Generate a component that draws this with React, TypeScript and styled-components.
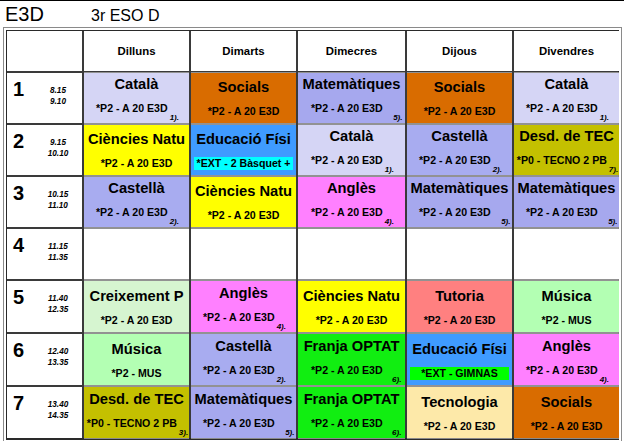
import React from "react";
import styled, { createGlobalStyle } from "styled-components";

const GlobalStyle = createGlobalStyle`
  html, body {
    margin: 0;
    padding: 0;
    background: #fff;
    font-family: "Liberation Sans", Arial, sans-serif;
    color: #000;
  }
`;

const Page = styled.div`
  width: 624px;
  height: 441px;
  overflow: hidden;
  border-top: 1px solid #000;
  box-sizing: border-box;
`;

const TitleBar = styled.div`
  height: 26px;
  box-sizing: border-box;
  padding: 2px 0 0 5px;
  display: flex;
  align-items: baseline;
`;

const Code = styled.div`
  width: 86px;
  font-size: 20px;
  line-height: 23px;
`;

const GroupName = styled.div`
  font-size: 16px;
  line-height: 23px;
`;

const Frame = styled.div`
  margin-left: 3px;
  width: 619px;
  box-sizing: border-box;
  border: 1px solid #8a8a8a;
  padding: 2px;
`;

const Grid = styled.div`
  display: grid;
  grid-template-columns: 75px 105px 105px 107px 105px 105px;
  grid-template-rows: 40px 50px 50px 50px 50px 51px 51px 51px;
  column-gap: 2px;
  row-gap: 2px;
  background: #3a3a3a;
  border: 1px solid #2a2a2a;
  border-bottom-width: 2px;
`;

const HeaderCell = styled.div`
  background: #fff;
  display: flex;
  align-items: center;
  justify-content: center;
  font-size: 11.4px;
  font-weight: bold;
`;

const TimeCell = styled.div`
  background: #fff;
  display: grid;
  grid-template-columns: 33px 1fr;
  padding-right: 6px;
`;

const SlotNumber = styled.div`
  font-size: 20px;
  line-height: 23px;
  font-weight: bold;
  padding: 5px 0 0 6px;
`;

const Times = styled.div`
  padding-top: 12px;
  font-size: 8.2px;
  line-height: 11.4px;
  font-weight: bold;
  font-style: italic;
  text-align: center;
`;

const Lesson = styled.div<{ $bg: string }>`
  background: ${(p) => p.$bg};
  display: flex;
  align-items: center;
  justify-content: center;
  overflow: hidden;
  box-shadow: 0 1px 0 rgba(255, 255, 255, 0.45), 0 -1px 0 rgba(255, 255, 255, 0.45);
`;

const Inner = styled.div`
  display: inline-flex;
  flex-direction: column;
  align-items: stretch;
`;

const Subject = styled.div`
  font-size: 14.7px;
  line-height: 18px;
  font-weight: bold;
  text-align: center;
  white-space: nowrap;
  padding: 0 2px;
`;

const RoomRow = styled.div`
  display: flex;
  margin-top: 9px;
`;

const Room = styled.div<{ $badge?: string }>`
  flex: 1;
  background: ${(p) => p.$badge || "transparent"};
  font-size: 10.6px;
  line-height: 13px;
  font-weight: bold;
  text-align: center;
  white-space: nowrap;
  padding: 0 2px;
`;

const NoteGhost = styled.span`
  visibility: hidden;
  font-size: 8px;
  line-height: 13px;
  font-weight: bold;
  font-style: italic;
  white-space: nowrap;
`;

const NoteRow = styled.div`
  font-size: 8px;
  line-height: 6px;
  height: 6px;
  font-weight: bold;
  font-style: italic;
  text-align: right;
  white-space: nowrap;
`;

type L = { s: string; c: string; r?: string; n?: string; b?: string };

const ROOM = "*P2 - A 20 E3D";
const C = {
  cat: "#d5d5f5",
  soc: "#d96c00",
  mat: "#a6a8ee",
  cas: "#a8acf0",
  cie: "#ffff00",
  ef: "#3f9bff",
  tec: "#c4c000",
  ang: "#ff80ff",
  cre: "#d6f5d0",
  mus: "#b3ffb3",
  tut: "#ff8080",
  fra: "#11ee11",
  tcn: "#fde9a9",
};

const cat = (n?: string): L => ({ s: "Català", c: C.cat, n });
const soc: L = { s: "Socials", c: C.soc };
const mat: L = { s: "Matemàtiques", c: C.mat, n: "5)." };
const cas: L = { s: "Castellà", c: C.cas, n: "2)." };
const cie: L = { s: "Ciències Natu", c: C.cie };
const ang: L = { s: "Anglès", c: C.ang, n: "4)." };
const mus: L = { s: "Música", c: C.mus, r: "*P2 - MUS" };
const fra: L = { s: "Franja OPTAT", c: C.fra, n: "6)." };
const tec = (n: string): L => ({ s: "Desd. de TEC", c: C.tec, r: "*P0 - TECNO 2 PB", n });

const DAYS = ["Dilluns", "Dimarts", "Dimecres", "Dijous", "Divendres"];

const SLOTS: { t: [string, string]; l: (L | null)[] }[] = [
  { t: ["8.15", "9.10"], l: [cat("1)."), soc, mat, soc, cat("1).")] },
  {
    t: ["9.15", "10.10"],
    l: [
      cie,
      { s: "Educació Físi", c: C.ef, r: "*EXT - 2 Bàsquet +", b: "#00ffff" },
      cat("1)."),
      cas,
      tec("7)."),
    ],
  },
  { t: ["10.15", "11.10"], l: [cas, cie, ang, mat, mat] },
  { t: ["11.15", "11.35"], l: [null, null, null, null, null] },
  {
    t: ["11.40", "12.35"],
    l: [{ s: "Creixement P", c: C.cre }, ang, cie, { s: "Tutoria", c: C.tut }, mus],
  },
  {
    t: ["12.40", "13.35"],
    l: [mus, cas, fra, { s: "Educació Físi", c: C.ef, r: "*EXT - GIMNAS", b: "#00ff00" }, ang],
  },
  {
    t: ["13.40", "14.35"],
    l: [tec("3)."), mat, fra, { s: "Tecnologia", c: C.tcn }, soc],
  },
];

function LessonCell({ l }: { l: L | null }) {
  if (!l) return <Lesson $bg="#fff" />;
  return (
    <Lesson $bg={l.c}>
      <Inner>
        <Subject>{l.s}</Subject>
        <RoomRow>
          <Room $badge={l.b}>{l.r || ROOM}</Room>
          {l.n && <NoteGhost>{l.n}</NoteGhost>}
        </RoomRow>
        {l.n && <NoteRow>{l.n}</NoteRow>}
      </Inner>
    </Lesson>
  );
}

export default function App() {
  return (
    <Page>
      <GlobalStyle />
      <TitleBar>
        <Code>E3D</Code>
        <GroupName>3r ESO D</GroupName>
      </TitleBar>
      <Frame>
        <Grid>
          <HeaderCell />
          {DAYS.map((d) => (
            <HeaderCell key={d}>{d}</HeaderCell>
          ))}
          {SLOTS.map((slot, i) => (
            <React.Fragment key={i}>
              <TimeCell>
                <SlotNumber>{i + 1}</SlotNumber>
                <Times>
                  {slot.t[0]}
                  <br />
                  {slot.t[1]}
                </Times>
              </TimeCell>
              {slot.l.map((l, j) => (
                <LessonCell key={j} l={l} />
              ))}
            </React.Fragment>
          ))}
        </Grid>
      </Frame>
    </Page>
  );
}
